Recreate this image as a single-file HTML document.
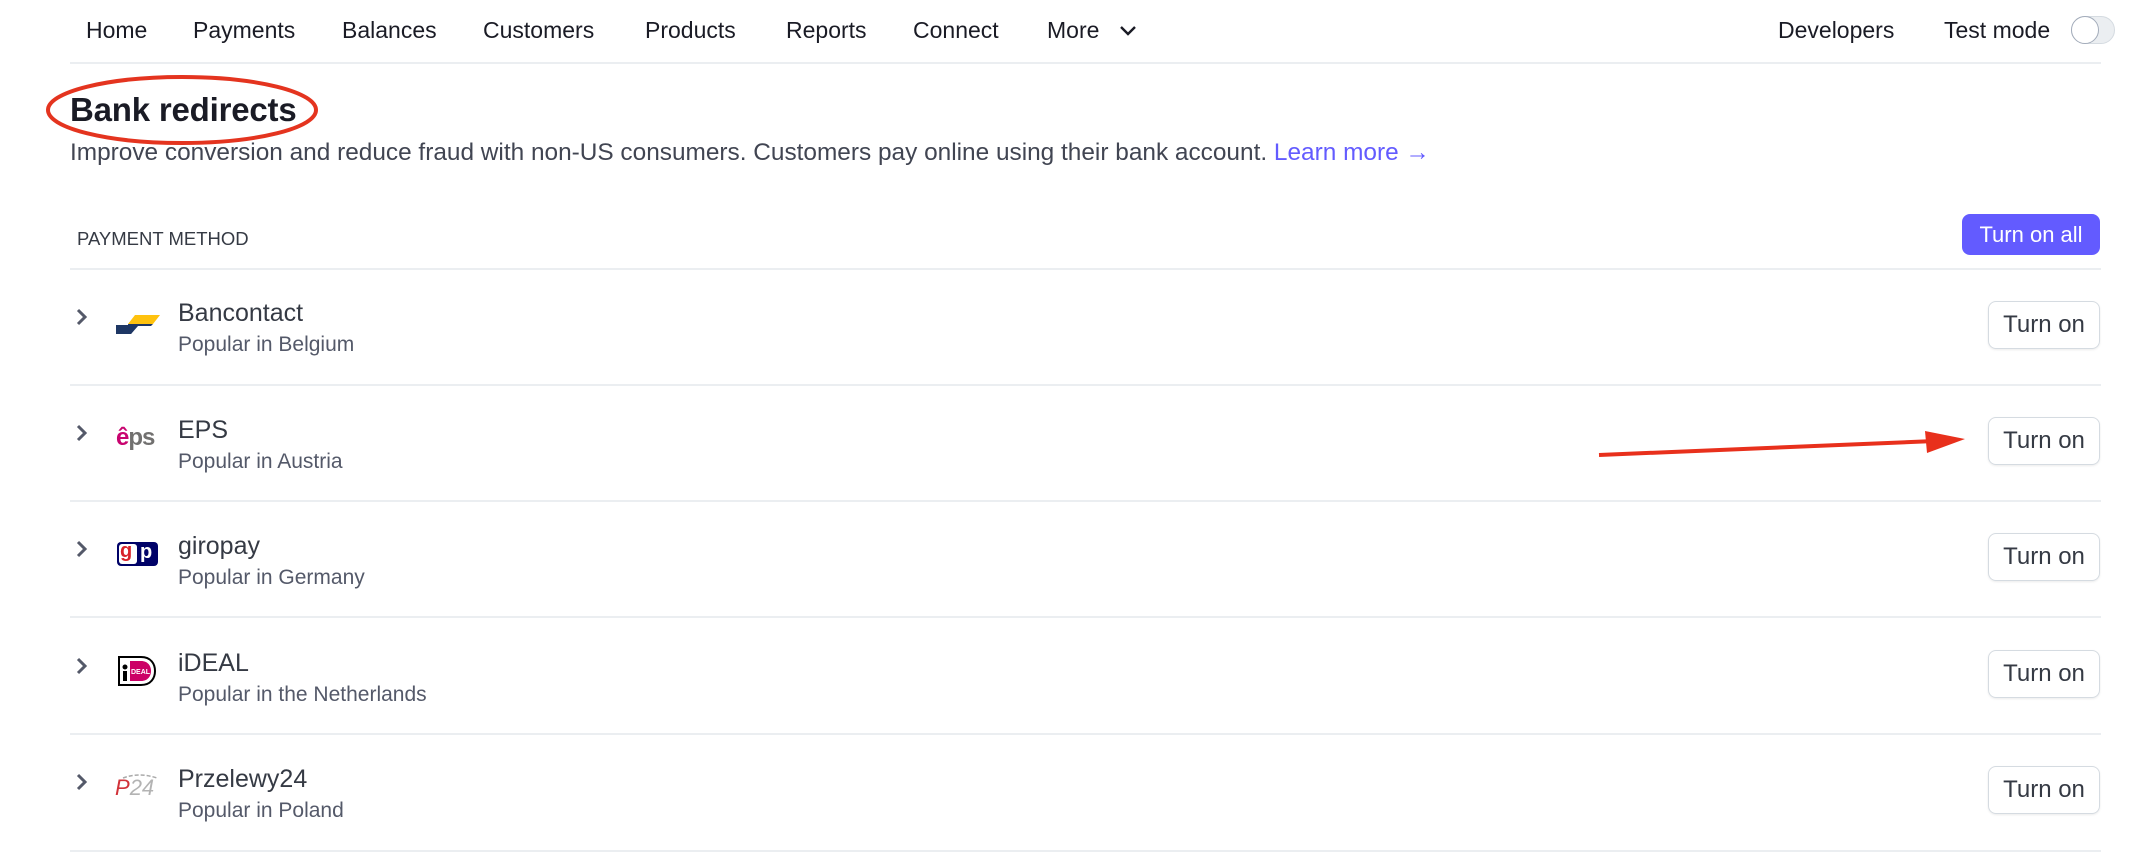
<!DOCTYPE html>
<html><head><meta charset="utf-8"><style>
*{margin:0;padding:0;box-sizing:border-box}
body{width:2146px;height:864px;background:#fff;font-family:"Liberation Sans",Arial,sans-serif;color:#1a1b25;position:relative;overflow:hidden}
.a{position:absolute;white-space:nowrap}
.nav{font-size:23px;top:17px;color:#1a1b25}
.line{position:absolute;left:70px;width:2031px;height:2px;background:#ebeef1}
.title{font-size:25px;color:#353a44;left:178px}
.sub{font-size:21px;color:#545969;left:178px}
.btn{position:absolute;left:1988px;width:112px;height:48px;border:1.5px solid #d5dbe1;border-radius:8px;font-size:24px;color:#353a44;text-align:center;line-height:45px;box-shadow:0 1px 2px rgba(0,0,0,.08)}
.chev{position:absolute;left:74px}
</style></head><body>
<div class="a nav" style="left:86px">Home</div>
<div class="a nav" style="left:193px">Payments</div>
<div class="a nav" style="left:342px">Balances</div>
<div class="a nav" style="left:483px">Customers</div>
<div class="a nav" style="left:645px">Products</div>
<div class="a nav" style="left:786px">Reports</div>
<div class="a nav" style="left:913px">Connect</div>
<div class="a nav" style="left:1047px">More</div>
<svg class="a" style="left:1118px;top:24px" width="20" height="14"><path d="M3 3l7 7 7-7" fill="none" stroke="#1a1b25" stroke-width="2.4"/></svg>
<div class="a nav" style="left:1778px">Developers</div>
<div class="a nav" style="left:1944px">Test mode</div>
<div class="a" style="left:2071px;top:16px;width:44px;height:28px;border-radius:14px;background:#ebeef1;border:1px solid #d5dbe1"></div>
<div class="a" style="left:2071px;top:16px;width:28px;height:28px;border-radius:50%;background:#fff;border:1.5px solid #a3acba"></div>
<div class="line" style="top:62px"></div>

<div class="a" style="left:70px;top:91px;font-size:33px;font-weight:bold;color:#1a1b25;letter-spacing:-0.2px">Bank redirects</div>
<svg class="a" style="left:40px;top:68px" width="290" height="86"><ellipse cx="142" cy="42" rx="134" ry="33" fill="none" stroke="#e4341f" stroke-width="4"/></svg>
<div class="a" style="left:70px;top:139px;font-size:24.4px;color:#414552">Improve conversion and reduce fraud with non-US consumers. Customers pay online using their bank account. <span style="color:#635bff">Learn more →</span></div>

<div class="a" style="left:77px;top:228px;font-size:18.5px;color:#353a44">PAYMENT METHOD</div>
<div class="a" style="left:1962px;top:214px;width:138px;height:41px;background:#635bff;border-radius:8px;color:#fff;font-size:22px;text-align:center;line-height:41px">Turn on all</div>
<div class="line" style="top:268px"></div>

<svg class="chev" style="top:306px" width="16" height="22"><path d="M4 4l7 7-7 7" fill="none" stroke="#545969" stroke-width="3"/></svg>
<svg class="a" style="left:115px;top:314px" width="46" height="22"><path d="M20 1h25l-7 9H13z" fill="#ffc20e"/><path d="M1 11h22l-7 9H1z" fill="#1e3764"/><path d="M13 10h25l-2 2H23l-7 8h-2z" fill="#1e3764"/></svg>
<div class="a title" style="top:299px">Bancontact</div>
<div class="a sub" style="top:333px">Popular in Belgium</div>
<div class="btn" style="top:301px">Turn on</div>
<div class="line" style="top:384px"></div>

<svg class="chev" style="top:422px" width="16" height="22"><path d="M4 4l7 7-7 7" fill="none" stroke="#545969" stroke-width="3"/></svg>
<div class="a" style="left:116px;top:424px;font-size:24px;font-weight:bold;letter-spacing:-1px"><span style="color:#c8036f">ê</span><span style="color:#71706f">ps</span></div>
<div class="a title" style="top:416px">EPS</div>
<div class="a sub" style="top:450px">Popular in Austria</div>
<div class="btn" style="top:417px">Turn on</div>
<div class="line" style="top:500px"></div>

<svg class="chev" style="top:538px" width="16" height="22"><path d="M4 4l7 7-7 7" fill="none" stroke="#545969" stroke-width="3"/></svg>
<div class="a" style="left:117px;top:542px;width:41px;height:24px;background:#000268;border-radius:4px"></div>
<div class="a" style="left:119px;top:544px;width:18px;height:20px;background:#fff;border-radius:3px"></div>
<div class="a" style="left:120px;top:540px;font-size:20px;font-weight:bold;color:#d8232a">g</div>
<div class="a" style="left:140px;top:541px;font-size:20px;font-weight:bold;color:#fff">p</div>
<div class="a title" style="top:532px">giropay</div>
<div class="a sub" style="top:566px">Popular in Germany</div>
<div class="btn" style="top:533px">Turn on</div>
<div class="line" style="top:616px"></div>

<svg class="chev" style="top:655px" width="16" height="22"><path d="M4 4l7 7-7 7" fill="none" stroke="#545969" stroke-width="3"/></svg>
<svg class="a" style="left:117px;top:655px" width="40" height="32"><path d="M2 2h22c10 0 14 7 14 14s-4 14-14 14H2z" fill="#fff" stroke="#000" stroke-width="2"/><path d="M13 6h11c7 0 10 5 10 10s-3 10-10 10H13z" fill="#cc0066"/><circle cx="8" cy="12" r="2.5" fill="#000"/><rect x="6" y="16" width="4" height="10" fill="#000"/><text x="14" y="19" font-size="7" font-weight="bold" fill="#fff" font-family="Liberation Sans">DEAL</text></svg>
<div class="a title" style="top:649px">iDEAL</div>
<div class="a sub" style="top:683px">Popular in the Netherlands</div>
<div class="btn" style="top:650px">Turn on</div>
<div class="line" style="top:733px"></div>

<svg class="chev" style="top:771px" width="16" height="22"><path d="M4 4l7 7-7 7" fill="none" stroke="#545969" stroke-width="3"/></svg>
<svg class="a" style="left:115px;top:768px" width="46" height="34"><path d="M8 10q16-6 34 0" fill="none" stroke="#aaa" stroke-width="1.5" stroke-dasharray="4 2"/></svg>
<div class="a" style="left:115px;top:775px;font-size:22px;font-style:italic"><span style="color:#d13239">P</span><span style="color:#b3b3b3">24</span></div>
<div class="a title" style="top:765px">Przelewy24</div>
<div class="a sub" style="top:799px">Popular in Poland</div>
<div class="btn" style="top:766px">Turn on</div>
<div class="line" style="top:850px"></div>

<svg class="a" style="left:1595px;top:425px" width="380" height="40"><path d="M4 30L340 16" stroke="#e8301c" stroke-width="4"/><path d="M330 6l40 8-38 14z" fill="#e8301c"/></svg>
</body></html>
